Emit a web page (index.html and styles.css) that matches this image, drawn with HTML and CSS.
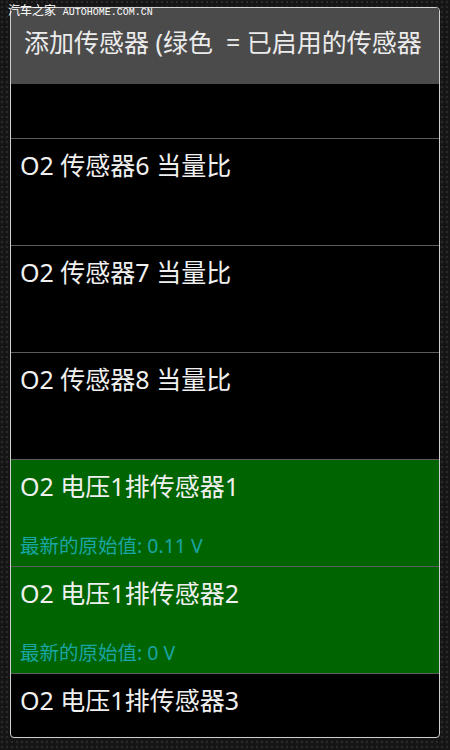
FILE: index.html
```html
<!DOCTYPE html>
<html lang="zh-CN">
<head>
  <meta charset="UTF-8">
  <title>添加传感器</title>
  <link rel="stylesheet" href="styles.css">
</head>
<body>
  <div class="watermark">汽车之家 <span class="wm-url">AUTOHOME.COM.CN</span></div>

  <div class="dialog">
    <div class="dialog-title">添加传感器 (绿色&nbsp; = 已启用的传感器</div>

    <ul class="sensor-list">
      <li class="sensor sensor-cut"></li>
      <li class="sensor">
        <div class="sensor-name">O2 传感器6 当量比</div>
      </li>
      <li class="sensor">
        <div class="sensor-name">O2 传感器7 当量比</div>
      </li>
      <li class="sensor">
        <div class="sensor-name">O2 传感器8 当量比</div>
      </li>
      <li class="sensor enabled">
        <div class="sensor-name">O2 电压1排传感器1</div>
        <div class="sensor-value">最新的原始值: 0.11 V</div>
      </li>
      <li class="sensor enabled">
        <div class="sensor-name">O2 电压1排传感器2</div>
        <div class="sensor-value">最新的原始值: 0 V</div>
      </li>
      <li class="sensor">
        <div class="sensor-name">O2 电压1排传感器3</div>
      </li>
    </ul>
  </div>
</body>
</html>
```

FILE: styles.css
```css
html, body {
  height: 100%;
}

body {
  margin: 0;
  padding: 7px 10px 14px 10px;
  box-sizing: border-box;
  background-color: #151515;
  background-image: radial-gradient(circle at 2px 2px, #2a2a2a 1.2px, transparent 1.6px);
  background-size: 5px 5px;
  font-family: "Noto Sans", "Noto Sans CJK SC", sans-serif;
  position: relative;
}

.watermark {
  position: absolute;
  top: 3px;
  left: 8px;
  color: #fff;
  font-family: "Noto Sans CJK SC", sans-serif;
  font-size: 12px;
  line-height: 14px;
  z-index: 2;
}

.wm-url {
  font-family: "Liberation Mono", monospace;
  font-size: 10px;
  margin-left: 4px;
}

.dialog {
  height: 729px;
  border: 1.5px solid #d0d0d0;
  border-radius: 4px;
  background: #000;
  display: flex;
  flex-direction: column;
  overflow: hidden;
}

.dialog-title {
  background: #4b4b4b;
  color: #ececec;
  height: 76px;
  line-height: 68px;
  padding-left: 13px;
  font-size: 25px;
  white-space: nowrap;
  flex-shrink: 0;
}

.sensor-list {
  list-style: none;
  margin: 0;
  padding: 0;
  flex: 1;
  overflow: hidden;
}

.sensor {
  height: 107px;
  box-sizing: border-box;
  padding: 11px 9px 0 9px;
  border-bottom: 1px solid #5c5c5c;
  color: #f0f0f0;
}

.sensor-cut {
  height: 55px;
}

.sensor.enabled {
  background: #006400;
}

.sensor-name {
  font-size: 25px;
  line-height: 30px;
}

.sensor-value {
  margin-top: 33px;
  font-size: 19.5px;
  line-height: 24px;
  color: #1aa5a5;
}
```
